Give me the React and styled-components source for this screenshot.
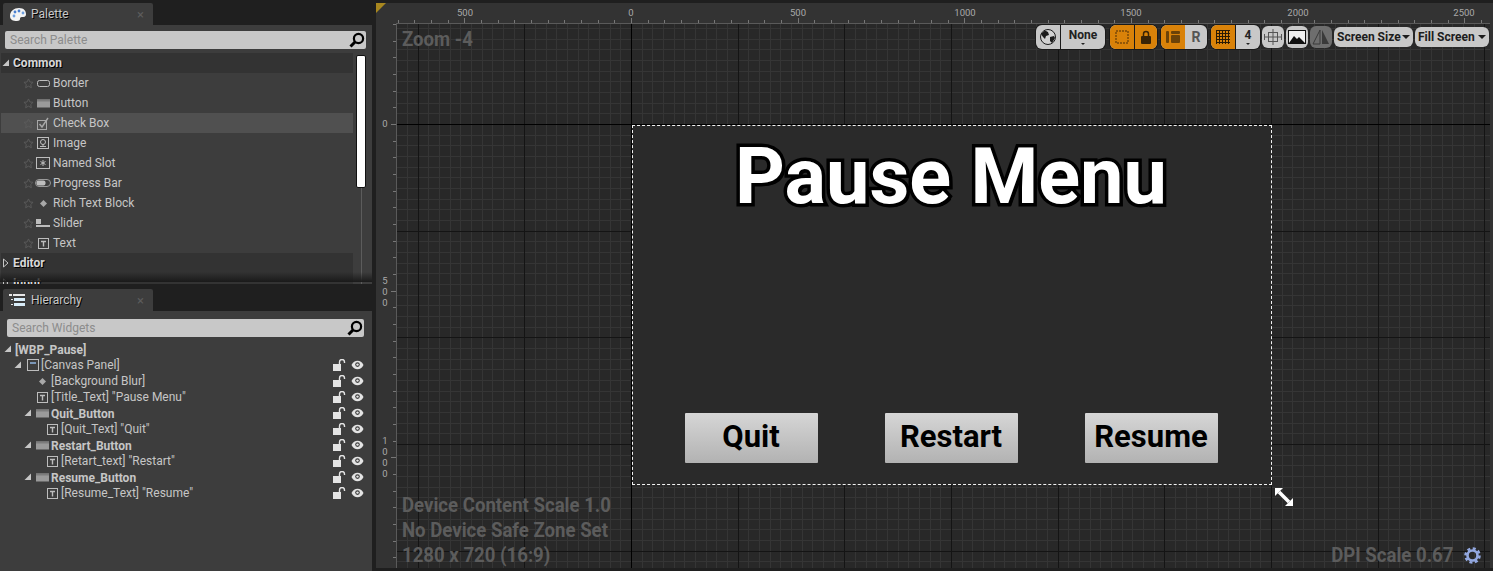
import React from 'react'
import styled, { createGlobalStyle } from 'styled-components'

const GlobalStyle = createGlobalStyle`
    html, body {
        margin: 0;
        width: 1493px;
        height: 571px;
        overflow: hidden;
        background: #1f1f1f;
        font-family: Roboto, "Liberation Sans", sans-serif;
    }
`;

const Page = styled.div`
    display: flex;
    width: 1493px;
    height: 571px;
    overflow: hidden;
`;

/* ---------- left side ---------- */
const Sidebar = styled.div`
    width: 372px;
    flex-shrink: 0;
    display: flex;
    flex-direction: column;
    background: #1f1f1f;
`;
const Dock = styled.section`
    display: flex;
    flex-direction: column;
    height: ${({ $height }) => $height}px;
    flex-shrink: 0;
    padding-top: ${({ $top }) => $top}px;
    box-sizing: border-box;
`;
const Tab = styled.div`
    width: 150px;
    height: 22px;
    margin-left: 3px;
    flex-shrink: 0;
    box-sizing: border-box;
    padding: 0 9px 0 6px;
    display: flex;
    align-items: center;
    gap: 4px;
    background: #3d3d3d;
    border-radius: 2px 2px 0 0;
    color: #c8c8c8;
    font-size: 12px;
    text-shadow: 1px 1px 0 #000;
`;
const TabIcon = styled.span`
    width: 18px;
    display: flex;
`;
const TabTitle = styled.span`
    flex: 1;
`;
const TabClose = styled.span`
    color: #5c5c5c;
    font-size: 13px;
    text-shadow: none;
`;
const DockBody = styled.div`
    flex: 1;
    min-height: 0;
    background: #3d3d3d;
    overflow: hidden;
    position: relative;
    display: flex;
    flex-direction: column;
`;
const SearchBox = styled.div`
    margin: ${({ $margin }) => $margin};
    height: 18px;
    flex-shrink: 0;
    background: #c8c8c8;
    border-radius: 2px;
    display: flex;
    align-items: center;
    justify-content: space-between;
    padding: 0 1px 0 5px;
    color: #8c8c8c;
    font-size: 12px;
`;
const ListArea = styled.div`
    flex: 1;
    min-height: 0;
    display: flex;
    padding-left: 1px;
`;
const List = styled.div`
    width: 352px;
    flex-shrink: 0;
`;
const Category = styled.div`
    height: 20px;
    display: flex;
    align-items: center;
    gap: 3px;
    padding-left: 1px;
    background: #333333;
    color: #d8d8d8;
    font-size: 12px;
    font-weight: 700;
    text-shadow: 1px 1px 0 #000;
`;
const PaletteRow = styled.div`
    height: 20px;
    display: flex;
    align-items: center;
    padding-left: 22px;
    background: ${({ $selected }) => ($selected ? '#505050' : 'transparent')};
    color: #c6c6c6;
    font-size: 12px;
`;
const IconSlot = styled.span`
    width: 16px;
    height: 16px;
    margin: 0 2px 0 1px;
    display: flex;
    align-items: center;
    justify-content: center;
`;
const ScrollTrack = styled.div`
    width: 10px;
    margin: 2px 0 0 3px;
    position: relative;
    display: flex;
    flex-direction: column;
    align-items: center;
`;
const ScrollThumb = styled.div`
    width: 10px;
    height: 133px;
    flex-shrink: 0;
    box-sizing: border-box;
    background: #fff;
    border: 1px solid #111;
    border-radius: 2px;
`;
const ScrollLine = styled.div`
    width: 1px;
    flex: 1;
    background: #5c5c5c;
`;
const ClipShade = styled.div`
    position: absolute;
    left: 0;
    right: 0;
    bottom: 2px;
    height: 10px;
    background: linear-gradient(to bottom, transparent, #1a1a1a);
`;
const TreeList = styled.div`
    padding-top: 4px;
`;
const TreeRow = styled.div`
    height: 16px;
    display: flex;
    align-items: center;
    padding-left: ${({ $indent }) => $indent}px;
    padding-right: 8px;
    color: #c6c6c6;
    font-size: 12px;
    font-weight: ${({ $bold }) => ($bold ? 700 : 400)};
    white-space: nowrap;
`;
const TreeLabel = styled.span`
    flex: 1;
    margin-top: ${({ $bold }) => ($bold ? 2 : 0)}px;
`;
const Expander = styled.span`
    width: 10px;
    height: 10px;
    margin-right: 1px;
    flex-shrink: 0;
    display: flex;
`;
const TreeIcon = styled.span`
    width: 15px;
    height: 14px;
    margin-right: 1px;
    flex-shrink: 0;
    display: flex;
    align-items: center;
    justify-content: center;
`;
const RowActions = styled.span`
    display: flex;
    align-items: center;
    gap: 5px;
`;

/* ---------- designer ---------- */
const Designer = styled.main`
    width: 1117px;
    margin: 3px 0 3px 4px;
    flex-shrink: 0;
    box-sizing: border-box;
    background: #333333;
    position: relative;
    display: grid;
    grid-template-columns: 20px 1fr;
    grid-template-rows: 20px 1fr;
    padding-right: 3px;
`;
const Corner = styled.div`
    position: absolute;
    left: 0;
    top: 0;
    width: 0;
    height: 0;
    border-top: 10px solid #a8871f;
    border-right: 10px solid transparent;
`;
const Ruler = styled.div`
    position: relative;
    color: #a9a9a9;
    font-size: 9.5px;
    grid-column: ${({ $column }) => $column};
    grid-row: ${({ $row }) => $row};
    overflow: hidden;
`;
const TopLabel = styled.span`
    position: absolute;
    top: 4px;
    transform: translateX(-50%);
`;
const SideLabel = styled.span`
    position: absolute;
    left: 5px;
    width: 8px;
    display: flex;
    flex-direction: column;
    align-items: center;
    line-height: 11px;
`;
const RulerTicks = styled.svg`
    position: absolute;
    left: 0;
    top: 0;
`;
const Viewport = styled.div`
    grid-column: 2;
    grid-row: 2;
    position: relative;
    overflow: hidden;
    background: #282828;
    border-left: 1px solid #5a5a5a;
    border-top: 1px solid #5a5a5a;
`;
const GridLines = styled.svg`
    position: absolute;
    left: 0;
    top: 0;
`;
const InfoText = styled.div`
    color: #5c5c5c;
    font-size: 20px;
    font-weight: 700;
    line-height: 25px;
    white-space: nowrap;
`;
const ZoomInfo = styled(InfoText)`
    position: absolute;
    left: 5px;
    top: 3px;
    transform: scaleX(0.93);
    transform-origin: left center;
`;
const DeviceInfo = styled(InfoText)`
    position: absolute;
    left: 5px;
    bottom: 0;
    transform: scaleX(0.93);
    transform-origin: left center;
`;
const DpiInfo = styled(InfoText)`
    position: absolute;
    right: 9px;
    bottom: 0;
    display: flex;
    align-items: center;
    gap: 11px;
`;
const DpiLabel = styled.span`
    transform: scaleX(0.93);
    transform-origin: right center;
`;
const Toolbar = styled.div`
    position: absolute;
    right: 1px;
    top: 1px;
    display: flex;
    align-items: center;
    height: 24px;
`;
const ToolGroup = styled.div`
    display: flex;
    height: 24px;
    margin-right: ${({ $gap }) => $gap}px;
    border-radius: 6px;
    overflow: hidden;
    background: #c8c8c8;
    box-shadow: 0 0 0 1px #1a1a1a;
`;
const ToolCell = styled.div`
    width: ${({ $width }) => $width}px;
    box-sizing: border-box;
    display: flex;
    flex-direction: column;
    align-items: center;
    justify-content: center;
    background: ${({ $on }) => ($on ? '#d98209' : 'transparent')};
    border-left: ${({ $line }) => ($line ? '1px solid #1a1a1a' : 'none')};
    color: ${({ $soft }) => ($soft ? '#555' : '#222')};
    font-size: ${({ $soft }) => ($soft ? 14 : 12)}px;
    font-weight: 700;
    line-height: 12px;
`;
const SmallCaret = styled.span`
    width: 0;
    height: 0;
    margin-top: 2px;
    border-left: 2px solid transparent;
    border-right: 2px solid transparent;
    border-top: 2px solid #222;
`;
const ToolButton = styled.div`
    width: 22px;
    height: 22px;
    margin-right: 2px;
    display: flex;
    align-items: center;
    justify-content: center;
    border-radius: 6px;
    background: ${({ $dim }) => ($dim ? '#6e6e6e' : '#c8c8c8')};
`;
const DropButton = styled.div`
    width: ${({ $width }) => $width}px;
    height: 20px;
    margin-right: ${({ $gap }) => $gap}px;
    box-sizing: border-box;
    padding: 0 3px;
    display: flex;
    align-items: center;
    justify-content: space-between;
    border-radius: 6px;
    background: #c8c8c8;
    color: #1c1c1c;
    font-size: 12px;
    font-weight: 700;
    white-space: nowrap;
`;
const Caret = styled.span`
    width: 0;
    height: 0;
    border-left: 4px solid transparent;
    border-right: 4px solid transparent;
    border-top: 4px solid #1c1c1c;
`;

/* the widget being designed sits on a free canvas */
const Frame = styled.div`
    position: absolute;
    left: 235px;
    top: 101px;
    width: 640px;
    height: 360px;
    box-sizing: border-box;
    border: 1px dashed #f2f2f2;
    background: #2a2a2a;
    display: flex;
    flex-direction: column;
    align-items: center;
    justify-content: space-between;
    padding-bottom: 21px;
`;
const Title = styled.h1`
    margin: 5px 2px 0 0;
    color: #fff;
    font-size: 77.5px;
    line-height: 92px;
    font-weight: 700;
    white-space: nowrap;
    -webkit-text-stroke: 7px #000;
    paint-order: stroke fill;
    text-shadow: 3px 3px 0 #000;
`;
const ButtonRow = styled.div`
    display: flex;
    gap: 67px;
    margin-right: 2px;
`;
const MenuButton = styled.div`
    width: 133px;
    height: 50px;
    box-sizing: border-box;
    padding-bottom: 4px;
    display: flex;
    align-items: center;
    justify-content: center;
    border-radius: 1px;
    background: linear-gradient(to bottom, #d6d6d6, #b2b2b2);
    color: #000;
    font-size: 31px;
    font-weight: 700;
`;
const ResizeHandle = styled.svg`
    position: absolute;
    left: 878px;
    top: 464px;
`;

/* ---------- drawings ---------- */
const PaletteIcon = () => (
    <svg width="18" height="14" viewBox="0 0 18 14">
        <path d="M1 9C1 4 5 1 10 1s7 3 7 6-2 3-4 3c-2 0-2 1-2 2s-1 2-3 2C4 14 1 13 1 9z" fill="#f4f4f4" />
        <circle cx="6" cy="5" r="1.4" fill="#4a7fd0" />
        <circle cx="10" cy="4" r="1.4" fill="#4a7fd0" />
        <circle cx="14" cy="6" r="1.4" fill="#6fa0e0" />
        <circle cx="5" cy="9" r="1.4" fill="#6fa0e0" />
    </svg>
);
const HierarchyIcon = () => (
    <svg width="16" height="12" viewBox="0 0 16 12" fill="#e6e6e6">
        <rect x="0" y="0" width="3" height="2" />
        <rect x="4" y="0" width="12" height="2" />
        <rect x="5" y="4" width="11" height="3" fill="#d8ecf8" />
        <rect x="5" y="9" width="11" height="3" fill="#d8ecf8" />
        <rect x="2" y="5" width="2" height="1" />
        <rect x="2" y="10" width="2" height="1" />
    </svg>
);
const SearchIcon = () => (
    <svg width="16" height="16" viewBox="0 0 16 16" fill="none" stroke="#000" strokeWidth="2.2">
        <circle cx="9.5" cy="6.5" r="4.6" />
        <path d="M6 10L1.5 14.5" strokeWidth="3" />
    </svg>
);
const StarIcon = () => (
    <svg width="11" height="11" viewBox="0 0 12 12" fill="none" stroke="#5c5c5c">
        <path d="M6 1l1.5 3.3 3.5.4-2.6 2.4.7 3.5L6 8.9l-3.1 1.7.7-3.5L1 4.7l3.5-.4z" />
    </svg>
);
const BorderIcon = () => (
    <svg width="13" height="9" viewBox="0 0 13 9" fill="none" stroke="#bdbdbd">
        <rect x="0.5" y="1.5" width="12" height="6" rx="2" />
    </svg>
);
const ButtonIcon = () => (
    <svg width="13" height="9" viewBox="0 0 13 9">
        <rect width="13" height="8" y="0.5" fill="#9a9a9a" />
        <rect width="13" height="2" y="0.5" fill="#7c7c7c" />
    </svg>
);
const CheckIcon = () => (
    <svg width="13" height="13" viewBox="0 0 13 13" fill="none" stroke="#a8a8a8">
        <rect x="0.5" y="3.5" width="9" height="9" />
        <path d="M2.5 7l2.5 3L11 1" strokeWidth="1.4" />
    </svg>
);
const ImageIcon = () => (
    <svg width="12" height="12" viewBox="0 0 12 12" fill="none" stroke="#bdbdbd">
        <rect x="0.5" y="0.5" width="11" height="11" />
        <circle cx="6" cy="5" r="2.5" />
        <path d="M6 7v2M3 9.5h6" />
    </svg>
);
const SlotIcon = () => (
    <svg width="14" height="12" viewBox="0 0 14 12" fill="none" stroke="#bdbdbd">
        <rect x="0.5" y="0.5" width="13" height="11" />
        <path d="M7 3v6M4.5 4.5l5 3M9.5 4.5l-5 3" />
    </svg>
);
const ProgressIcon = () => (
    <svg width="16" height="8" viewBox="0 0 16 8">
        <rect x="0.5" y="0.5" width="15" height="7" rx="3.5" fill="none" stroke="#9a9a9a" />
        <rect x="1.5" y="1.5" width="9" height="5" rx="2" fill="#bdbdbd" />
    </svg>
);
const DiamondIcon = () => (
    <svg width="7" height="7" viewBox="0 0 7 7">
        <path d="M3.5 0L7 3.5 3.5 7 0 3.5z" fill="#a8a8a8" />
    </svg>
);
const SliderIcon = () => (
    <svg width="14" height="9" viewBox="0 0 14 9" fill="#bdbdbd">
        <rect x="0" y="0" width="5" height="5" />
        <rect x="0" y="6" width="14" height="2" />
    </svg>
);
const TextIcon = () => (
    <svg width="11" height="11" viewBox="0 0 11 11" fill="none" stroke="#bdbdbd">
        <rect x="0.5" y="0.5" width="10" height="10" />
        <path d="M3 3.5h5M5.5 3.5V8.500" strokeWidth="1.4" />
    </svg>
);
const CanvasIcon = () => (
    <svg width="12" height="12" viewBox="0 0 12 12" fill="none" stroke="#bdbdbd">
        <rect x="0.5" y="0.5" width="11" height="11" />
        <path d="M3 4h6" stroke="#8fb4e0" strokeWidth="1.5" />
    </svg>
);
const OpenArrow = () => (
    <svg width="8" height="10" viewBox="0 0 8 10">
        <path d="M7 1.5V8H0.5z" fill="#c6c6c6" />
    </svg>
);
const ClosedArrow = () => (
    <svg width="8" height="10" viewBox="0 0 8 10" fill="none" stroke="#c6c6c6">
        <path d="M1.5 1v8L6 5z" />
    </svg>
);
const LockIcon = () => (
    <svg width="13" height="12" viewBox="0 0 13 12">
        <rect x="0" y="5" width="8" height="7" fill="#e4e4e4" />
        <path d="M6.5 5V3a2.5 2.5 0 0 1 5 0v1" fill="none" stroke="#e4e4e4" strokeWidth="1.4" />
    </svg>
);
const EyeIcon = () => (
    <svg width="13" height="10" viewBox="0 0 13 10">
        <path d="M0.5 5C2 2 4 .8 6.5 .8S11 2 12.5 5C11 8 9 9.2 6.5 9.2S2 8 .5 5z" fill="#e4e4e4" />
        <circle cx="6.5" cy="4.6" r="2.3" fill="#3d3d3d" />
        <circle cx="6.5" cy="4.6" r="1.2" fill="#e4e4e4" />
    </svg>
);
const GlobeIcon = () => (
    <svg width="16" height="16" viewBox="0 0 16 16">
        <circle cx="8" cy="8" r="7.5" fill="#d2d2d2" stroke="#1c1c1c" />
        <path d="M5 1.500l3 1.500 1 3-3 1-1 3-2-2-2-3zM10 8l4-1 1 2-3 5-2-2z" fill="#1c1c1c" />
    </svg>
);
const DashFrameIcon = () => (
    <svg width="14" height="14" viewBox="0 0 14 14" fill="none" stroke="#7a4a08" strokeWidth="1.5" strokeDasharray="2 1">
        <rect x="1" y="1" width="12" height="12" />
    </svg>
);
const PadlockIcon = () => (
    <svg width="12" height="14" viewBox="0 0 12 14">
        <rect x="1" y="6" width="10" height="8" rx="1" fill="#3a2406" />
        <path d="M3.5 6V4a2.5 2.5 0 0 1 5 0v2" fill="none" stroke="#3a2406" strokeWidth="1.5" />
    </svg>
);
const LayoutIcon = () => (
    <svg width="14" height="14" viewBox="0 0 14 14" fill="#6b4208">
        <rect x="0" y="1" width="3" height="12" rx="1" />
        <rect x="5" y="1" width="9" height="3" rx="1" />
        <rect x="5" y="5" width="9" height="8" rx="1" />
    </svg>
);
const GridIcon = () => (
    <svg width="14" height="14" viewBox="0 0 14 14" fill="none" stroke="#2a1a04">
        <path d="M.5 0v14M3.5 0v14M6.5 0v14M9.5 0v14M12.5 0v14M0 .5h14M0 3.5h14M0 6.5h14M0 9.5h14M0 12.5h14" />
    </svg>
);
const FitIcon = () => (
    <svg width="18" height="16" viewBox="0 0 18 16" fill="none" stroke="#555">
        <rect x="4.5" y="3.5" width="9" height="9" />
        <path d="M9 0v16M0 8h18M.5 5v6M17.5 5v6" />
    </svg>
);
const PictureIcon = () => (
    <svg width="18" height="14" viewBox="0 0 18 14">
        <rect x="0.5" y="0.5" width="17" height="13" fill="#f0f0f0" stroke="#111" />
        <path d="M1 13l5-7 3 3 2-2 6 6z" fill="#111" />
    </svg>
);
const FlipIcon = () => (
    <svg width="18" height="16" viewBox="0 0 18 16">
        <path d="M8 1L1 15h7z" fill="none" stroke="#3a3a3a" />
        <path d="M10 1l7 14h-7z" fill="#3a3a3a" />
    </svg>
);
const ResizeArrows = () => (
    <ResizeHandle width="18" height="18" viewBox="0 0 18 18" fill="#fff">
        <path d="M0 0h8L0 8zM18 18h-8l8-8z" />
        <path d="M4 4l10 10" stroke="#fff" strokeWidth="3.5" />
    </ResizeHandle>
);
const GearIcon = () => (
    <svg width="17" height="17" viewBox="0 0 17 17" fill="none" stroke="#93a8e0">
        <circle cx="8.5" cy="8.5" r="5" strokeWidth="2.6" />
        <circle cx="8.5" cy="8.5" r="7" strokeWidth="2.6" strokeDasharray="3 2.5" />
    </svg>
);

const paletteItems = [
    { label: 'Border', icon: <BorderIcon /> },
    { label: 'Button', icon: <ButtonIcon /> },
    { label: 'Check Box', icon: <CheckIcon />, selected: true },
    { label: 'Image', icon: <ImageIcon /> },
    { label: 'Named Slot', icon: <SlotIcon /> },
    { label: 'Progress Bar', icon: <ProgressIcon /> },
    { label: 'Rich Text Block', icon: <DiamondIcon /> },
    { label: 'Slider', icon: <SliderIcon /> },
    { label: 'Text', icon: <TextIcon /> },
];

const treeItems = [
    { label: '[Canvas Panel]', indent: 14, open: true, icon: <CanvasIcon /> },
    { label: '[Background Blur]', indent: 35, icon: <DiamondIcon /> },
    { label: '[Title_Text] "Pause Menu"', indent: 35, icon: <TextIcon /> },
    { label: 'Quit_Button', indent: 24, open: true, bold: true, icon: <ButtonIcon /> },
    { label: '[Quit_Text] "Quit"', indent: 45, icon: <TextIcon /> },
    { label: 'Restart_Button', indent: 24, open: true, bold: true, icon: <ButtonIcon /> },
    { label: '[Retart_text] "Restart"', indent: 45, icon: <TextIcon /> },
    { label: 'Resume_Button', indent: 24, open: true, bold: true, icon: <ButtonIcon /> },
    { label: '[Resume_Text] "Resume"', indent: 45, icon: <TextIcon /> },
];

// canvas geometry: the origin sits at (235, 101) from the rulers' start, zoom is 1/3
const VIEW_W = 1093;
const VIEW_H = 545;
const ORIGIN_X = 235;
const ORIGIN_Y = 101;
const MINOR = 320 / 30;
const MAJOR = 320 / 3;

const linesFrom = (origin, size, step) => {
    const out = [];
    const first = origin - Math.floor(origin / step) * step;
    for (let p = first; p < size; p += step) out.push(Math.round(p) + 0.5);
    return out;
};

const toPath = (xs, ys) =>
    xs.map((x) => `M${x} 0V${VIEW_H}`).join('') + ys.map((y) => `M0 ${y}H${VIEW_W}`).join('');

const CanvasGrid = () => {
    // the viewport has a 1px ruler edge, so its own origin is one pixel less
    const x0 = ORIGIN_X - 1;
    const y0 = ORIGIN_Y - 1;
    return (
        <GridLines width={VIEW_W} height={VIEW_H} shapeRendering="crispEdges" fill="none">
            <path d={toPath(linesFrom(x0, VIEW_W, MINOR), linesFrom(y0, VIEW_H, MINOR))} stroke="#353535" />
            <path d={toPath(linesFrom(x0, VIEW_W, MAJOR), linesFrom(y0, VIEW_H, MAJOR))} stroke="#141414" />
            <path d={toPath([x0 + 0.5], [y0 + 0.5])} stroke="#000" />
        </GridLines>
    );
};

const topLabels = [
    [-500, 69], [0, 235], [500, 402], [1000, 569], [1500, 735], [2000, 902], [2500, 1068],
];

const TopRuler = () => (
    <Ruler $column="2" $row="1">
        <RulerTicks width={VIEW_W} height="20" shapeRendering="crispEdges" fill="none">
            <path d={linesFrom(ORIGIN_X, VIEW_W, 500 / 30).map((x) => `M${x} 17V20`).join('')} stroke="#777" />
            <path d={linesFrom(ORIGIN_X, VIEW_W, 500 / 3).map((x) => `M${x} 15V20`).join('')} stroke="#777" />
        </RulerTicks>
        {topLabels.map(([value, x]) => (
            <TopLabel key={value} style={{ left: x }}>{Math.abs(value)}</TopLabel>
        ))}
    </Ruler>
);

const SideRuler = () => (
    <Ruler $column="1" $row="2">
        <RulerTicks width="20" height={VIEW_H} shapeRendering="crispEdges" fill="none">
            <path d={linesFrom(ORIGIN_Y, VIEW_H, 500 / 30).map((y) => `M17 ${y}H20`).join('')} stroke="#777" />
            <path d={linesFrom(ORIGIN_Y, VIEW_H, 500 / 3).map((y) => `M15 ${y}H20`).join('')} stroke="#777" />
        </RulerTicks>
        <SideLabel style={{ top: 95 }}><span>0</span></SideLabel>
        <SideLabel style={{ top: 252 }}><span>5</span><span>0</span><span>0</span></SideLabel>
        <SideLabel style={{ top: 412 }}><span>1</span><span>0</span><span>0</span><span>0</span></SideLabel>
    </Ruler>
);

const Row = ({ item }) => (
    <PaletteRow $selected={item.selected}>
        <StarIcon />
        <IconSlot>{item.icon}</IconSlot>
        {item.label}
    </PaletteRow>
);

const App = () => {
    return (
        <Page>
            <GlobalStyle />
            <Sidebar>
                <Dock $height={284} $top={3}>
                    <Tab>
                        <TabIcon><PaletteIcon /></TabIcon>
                        <TabTitle>Palette</TabTitle>
                        <TabClose>×</TabClose>
                    </Tab>
                    <DockBody>
                        <SearchBox $margin="6px 6px 4px 5px">
                            Search Palette
                            <SearchIcon />
                        </SearchBox>
                        <ListArea>
                            <List>
                                <Category><OpenArrow />Common</Category>
                                {paletteItems.map((item) => <Row key={item.label} item={item} />)}
                                <Category><ClosedArrow />Editor</Category>
                                <Category><ClosedArrow />Input</Category>
                            </List>
                            <ScrollTrack>
                                <ScrollThumb />
                                <ScrollLine />
                            </ScrollTrack>
                        </ListArea>
                        <ClipShade />
                    </DockBody>
                </Dock>
                <Dock $height={287} $top={5}>
                    <Tab>
                        <TabIcon><HierarchyIcon /></TabIcon>
                        <TabTitle>Hierarchy</TabTitle>
                        <TabClose>×</TabClose>
                    </Tab>
                    <DockBody>
                        <SearchBox $margin="8px 8px 0 7px">
                            Search Widgets
                            <SearchIcon />
                        </SearchBox>
                        <TreeList>
                            <TreeRow $indent={4} $bold>
                                <Expander><OpenArrow /></Expander>
                                <TreeLabel $bold>[WBP_Pause]</TreeLabel>
                            </TreeRow>
                            {treeItems.map((item) => (
                                <TreeRow key={item.label} $indent={item.indent} $bold={item.bold}>
                                    {item.open && <Expander><OpenArrow /></Expander>}
                                    <TreeIcon>{item.icon}</TreeIcon>
                                    <TreeLabel $bold={item.bold}>{item.label}</TreeLabel>
                                    <RowActions>
                                        <LockIcon />
                                        <EyeIcon />
                                    </RowActions>
                                </TreeRow>
                            ))}
                        </TreeList>
                    </DockBody>
                </Dock>
            </Sidebar>
            <Designer>
                <Corner />
                <TopRuler />
                <SideRuler />
                <Viewport>
                    <CanvasGrid />
                    <Frame>
                        <Title>Pause Menu</Title>
                        <ButtonRow>
                            <MenuButton>Quit</MenuButton>
                            <MenuButton>Restart</MenuButton>
                            <MenuButton>Resume</MenuButton>
                        </ButtonRow>
                    </Frame>
                    <ResizeArrows />
                    <ZoomInfo>Zoom -4</ZoomInfo>
                    <DeviceInfo>
                        <div>Device Content Scale 1.0</div>
                        <div>No Device Safe Zone Set</div>
                        <div>1280 x 720 (16:9)</div>
                    </DeviceInfo>
                    <DpiInfo>
                        <DpiLabel>DPI Scale 0.67</DpiLabel>
                        <GearIcon />
                    </DpiInfo>
                    <Toolbar>
                        <ToolGroup $gap={5}>
                            <ToolCell $width={24}><GlobeIcon /></ToolCell>
                            <ToolCell $width={45} $line>None<SmallCaret /></ToolCell>
                        </ToolGroup>
                        <ToolGroup $gap={4}>
                            <ToolCell $width={24} $on><DashFrameIcon /></ToolCell>
                            <ToolCell $width={23} $on $line><PadlockIcon /></ToolCell>
                        </ToolGroup>
                        <ToolGroup $gap={4}>
                            <ToolCell $width={24} $on><LayoutIcon /></ToolCell>
                            <ToolCell $width={22} $soft>R</ToolCell>
                        </ToolGroup>
                        <ToolGroup $gap={2}>
                            <ToolCell $width={24} $on><GridIcon /></ToolCell>
                            <ToolCell $width={25} $line>4<SmallCaret /></ToolCell>
                        </ToolGroup>
                        <ToolButton><FitIcon /></ToolButton>
                        <ToolButton><PictureIcon /></ToolButton>
                        <ToolButton $dim><FlipIcon /></ToolButton>
                        <DropButton $width={79} $gap={2}>Screen Size<Caret /></DropButton>
                        <DropButton $width={74} $gap={0}>Fill Screen<Caret /></DropButton>
                    </Toolbar>
                </Viewport>
            </Designer>
        </Page>
    )
}

export default App
